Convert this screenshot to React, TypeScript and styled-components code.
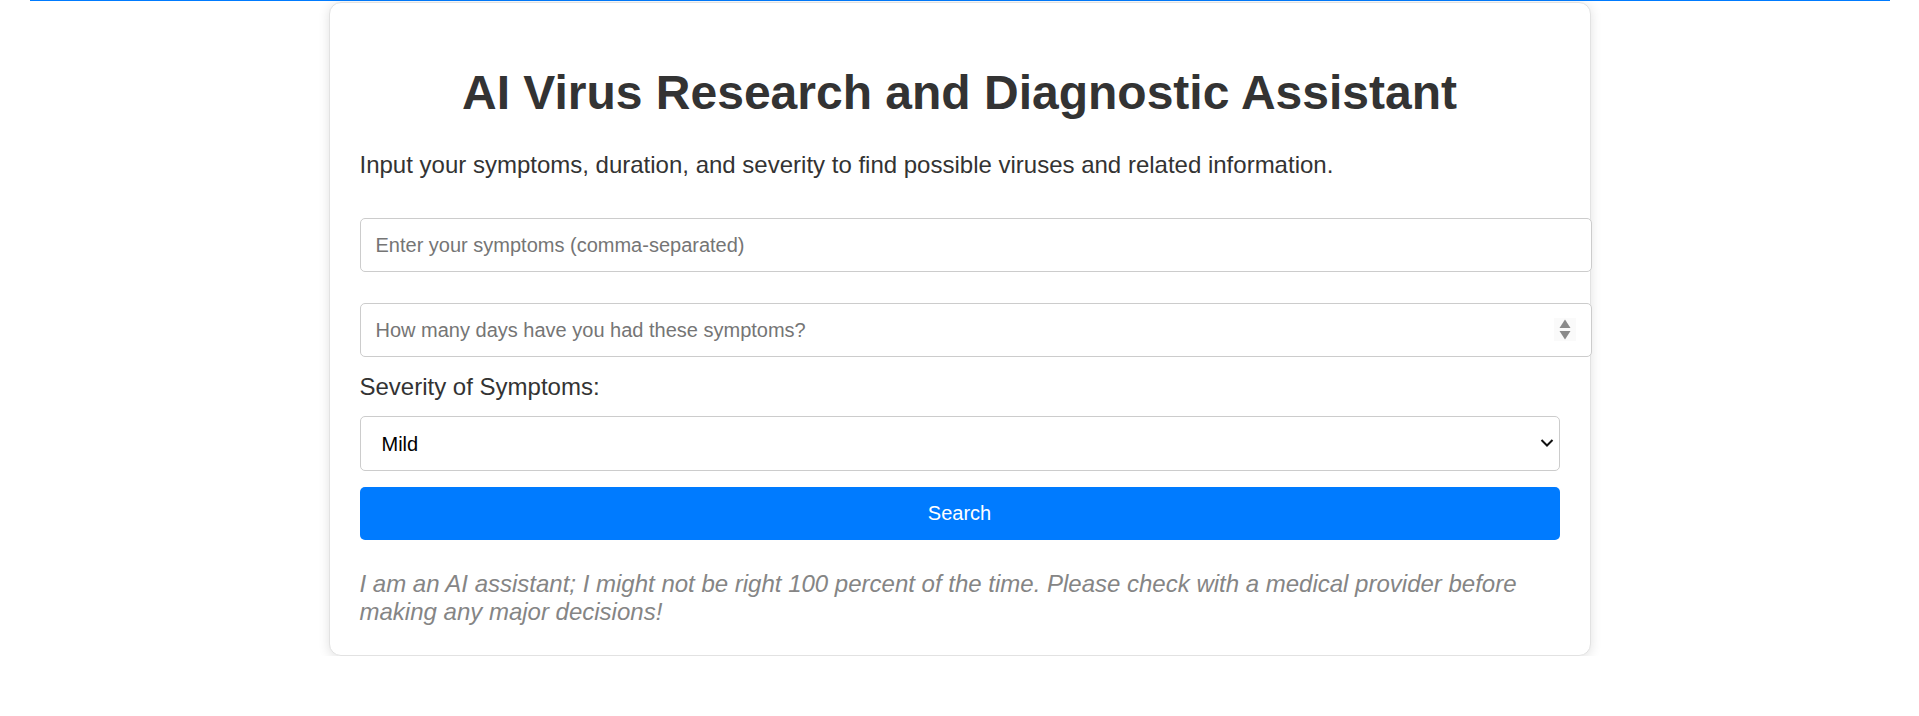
import { createGlobalStyle, styled } from 'styled-components';

const GlobalStyle = createGlobalStyle`
  body {
    margin: 0;
    background: #ffffff;
    font-family: 'Liberation Sans', Arial, sans-serif;
  }
`;

const TopRule = styled.div`
  height: 1px;
  margin: 0 29px 0 30px;
  background-color: #007bff;
`;

const Card = styled.div`
  width: 1200px;
  margin: 1px auto 0;
  padding: 30px;
  border: 1px solid #e2e2e2;
  border-radius: 12px;
  background-color: #ffffff;
  box-shadow: 0 2px 12px rgba(0, 0, 0, 0.12);
  color: #333333;
`;

const Title = styled.h1`
  margin: 0 0 31px;
  padding-top: 32px;
  font-size: 48px;
  line-height: 55px;
  font-weight: 700;
  text-align: center;
  color: #333333;
`;

const Intro = styled.p`
  margin: 0 0 40px;
  font-size: 24px;
  line-height: 27px;
`;

const Field = styled.div<{ $gap: number }>`
  position: relative;
  margin-bottom: ${(p) => p.$gap}px;
`;

const TextInput = styled.input`
  display: block;
  width: 100%;
  height: 52px;
  margin: 0;
  padding: 0 15px;
  border: 1px solid #cccccc;
  border-radius: 5px;
  box-sizing: content-box;
  font-family: 'Liberation Sans', Arial, sans-serif;
  font-size: 20px;
  color: #333333;
  background: #ffffff;
  -moz-appearance: textfield;

  &::placeholder {
    color: #757575;
  }

  &::-webkit-inner-spin-button,
  &::-webkit-outer-spin-button {
    -webkit-appearance: none;
    margin: 0;
  }
`;

const Spinner = styled.span`
  position: absolute;
  top: 15px;
  right: -16px;
  width: 22px;
  height: 23px;
  display: flex;
  align-items: center;
  justify-content: center;
  background-color: #fafafa;
  pointer-events: none;
`;

const Label = styled.label`
  display: block;
  margin-bottom: 16px;
  font-size: 24px;
  line-height: 27px;
  color: #333333;
`;

const Select = styled.select`
  display: block;
  width: 100%;
  height: 55px;
  margin: 0;
  padding: 0 15px 0 21px;
  border: 1px solid #cccccc;
  border-radius: 5px;
  box-sizing: border-box;
  background: #ffffff;
  font-family: 'Liberation Sans', Arial, sans-serif;
  font-size: 20px;
  color: #000000;
  appearance: none;
`;

const Chevron = styled.span`
  position: absolute;
  top: 22px;
  right: 6px;
  width: 14px;
  height: 10px;
  display: flex;
  pointer-events: none;
`;

const SearchButton = styled.button`
  display: block;
  width: 100%;
  height: 53px;
  margin-bottom: 30px;
  border: none;
  border-radius: 5px;
  background-color: #007bff;
  color: #ffffff;
  font-family: 'Liberation Sans', Arial, sans-serif;
  font-size: 20px;
  cursor: pointer;
`;

const Disclaimer = styled.p`
  margin: 0;
  font-size: 24px;
  line-height: 27.5px;
  font-style: italic;
  color: #858585;
`;

export default function App() {
  return (
    <>
      <GlobalStyle />
      <TopRule />
      <Card>
        <Title>AI Virus Research and Diagnostic Assistant</Title>
        <Intro>
          Input your symptoms, duration, and severity to find possible viruses and related information.
        </Intro>
        <Field $gap={31}>
          <TextInput type="text" placeholder="Enter your symptoms (comma-separated)" />
        </Field>
        <Field $gap={16}>
          <TextInput type="number" placeholder="How many days have you had these symptoms?" />
          <Spinner>
            <svg width="12" height="23" viewBox="0 0 12 23">
              <path d="M6 1.5 L11.5 10 L0.5 10 Z" fill="#8a8a8a" />
              <path d="M0.5 13 L11.5 13 L6 21.5 Z" fill="#8a8a8a" />
            </svg>
          </Spinner>
        </Field>
        <Label htmlFor="severity">Severity of Symptoms:</Label>
        <Field $gap={16}>
          <Select id="severity" defaultValue="mild">
            <option value="mild">Mild</option>
            <option value="moderate">Moderate</option>
            <option value="severe">Severe</option>
          </Select>
          <Chevron>
            <svg width="14" height="10" viewBox="0 0 14 10">
              <path d="M1.5 2 L7 7.5 L12.5 2" fill="none" stroke="#111111" strokeWidth="2" />
            </svg>
          </Chevron>
        </Field>
        <SearchButton>Search</SearchButton>
        <Disclaimer>
          I am an AI assistant; I might not be right 100 percent of the time. Please check with a medical
          provider before making any major decisions!
        </Disclaimer>
      </Card>
    </>
  );
}
